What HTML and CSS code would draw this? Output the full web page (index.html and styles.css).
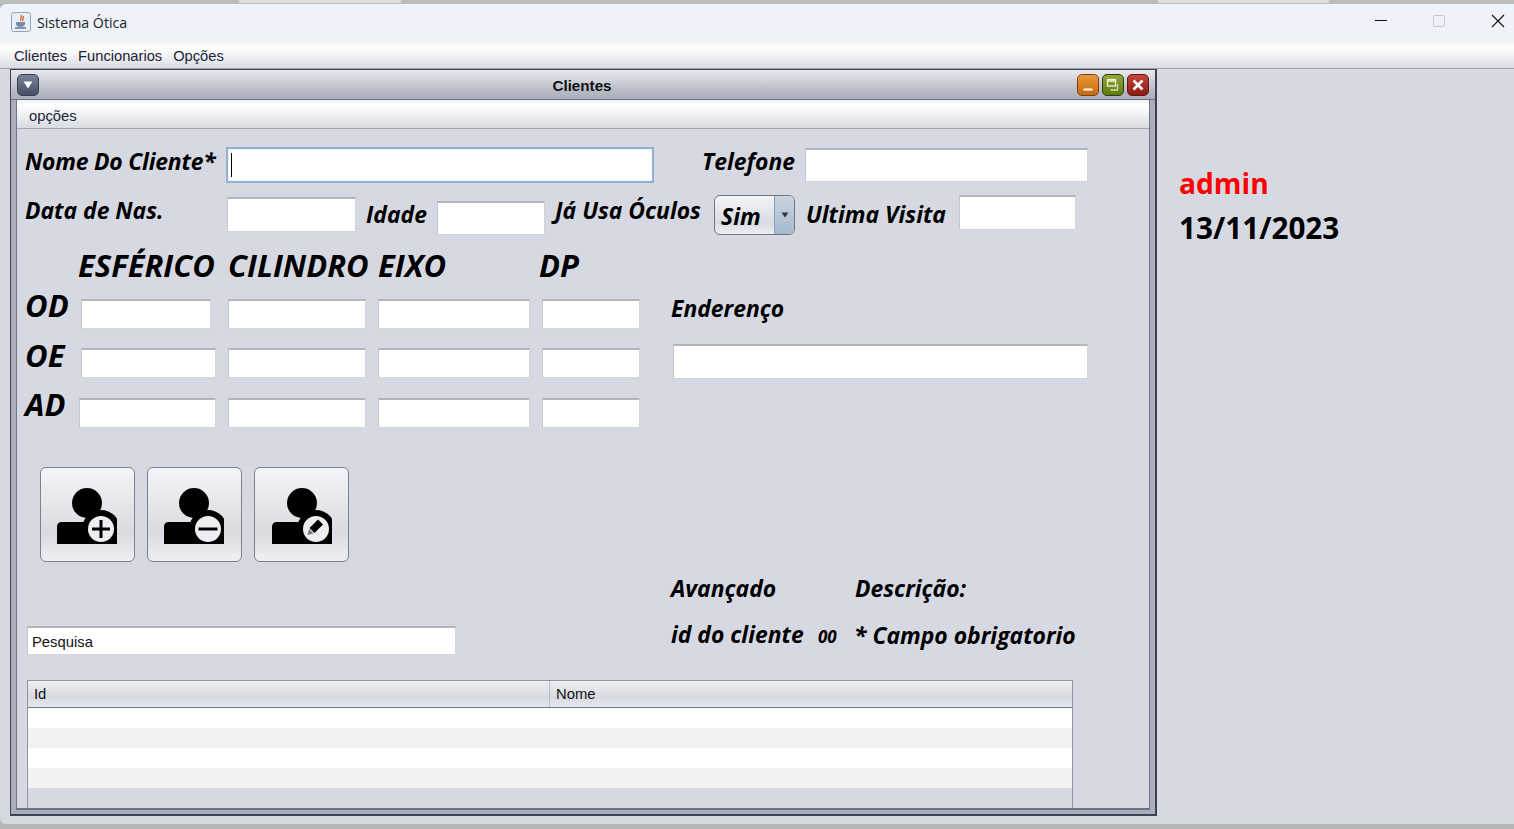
FILE: index.html
```html
<!DOCTYPE html>
<html lang="pt">
<head>
<meta charset="utf-8">
<title>Sistema Ótica</title>
<link rel="stylesheet" href="styles.css">
</head>
<body>
<div class="window">
  <div class="top-strip"><span class="strip-tab tab-a"></span><span class="strip-tab tab-b"></span></div>
  <header class="titlebar">
    <svg class="app-icon" width="20" height="20" viewBox="0 0 20 20">
      <rect x="0.500" y="0.500" width="19" height="19" rx="2" fill="#e9edf4" stroke="#8ea3bd"/>
      <path d="M10 3c2 2-2 3 0 6M12 4c1 2-1 3 0 5" fill="none" stroke="#d9642a" stroke-width="1.400"/>
      <path d="M5 10h9v2c0 2-2 3-4.500 3S5 14 5 12z" fill="#7a8ca6"/>
      <path d="M4 16h11" stroke="#5f7796" stroke-width="1.500"/>
    </svg>
    <span class="app-title">Sistema Ótica</span>
    <div class="win-controls">
      <svg width="14" height="14" viewBox="0 0 14 14"><path d="M0 6.500h12" stroke="#111" stroke-width="1"/></svg>
      <svg width="14" height="14" viewBox="0 0 14 14"><rect x="0.500" y="1.500" width="11" height="11" rx="1.500" fill="none" stroke="#c6c9cf"/></svg>
      <svg width="14" height="14" viewBox="0 0 14 14"><path d="M1 1l12 12M13 1L1 13" stroke="#111" stroke-width="1.100"/></svg>
    </div>
  </header>
  <nav class="menubar">
    <span>Clientes</span><span>Funcionarios</span><span>Opções</span>
  </nav>
  <main class="desktop">
    <section class="frame">
      <div class="frame-title">
        <span class="frame-btn btn-menu"><svg width="12" height="10" viewBox="0 0 12 10"><path d="M1.500 1.500h9L6 8.500z" fill="#fff"/></svg></span>
        <span class="frame-name">Clientes</span>
        <span class="frame-btn btn-min"><svg width="14" height="14" viewBox="0 0 14 14"><path d="M2.500 11.500h9" stroke="#fff" stroke-width="2"/></svg></span>
        <span class="frame-btn btn-max"><svg width="16" height="16" viewBox="0 0 16 16"><rect x="2.500" y="2.500" width="8" height="6.500" fill="none" stroke="#f1f3df" stroke-width="1.300"/><path d="M2.500 4h8" stroke="#f1f3df" stroke-width="1.500"/><path d="M12.500 7v6h-7" fill="none" stroke="#d8dcb4" stroke-width="1.300"/></svg></span>
        <span class="frame-btn btn-close"><svg width="14" height="14" viewBox="0 0 14 14"><path d="M2.500 2.500l9 9M11.500 2.500l-9 9" stroke="#fff" stroke-width="2.600"/></svg></span>
      </div>
      <div class="frame-inner">
        <div class="frame-menu"><span>opções</span></div>
        <form class="form">
          <div class="row row-1">
            <label class="lbl lbl-nome">Nome Do Cliente*</label>
            <div class="field field-focus f-nome"><i class="caret"></i></div>
            <label class="lbl lbl-tel">Telefone</label>
            <div class="field f-tel"></div>
          </div>
          <div class="row row-2">
            <label class="lbl lbl-data">Data de Nas.</label>
            <div class="field f-data"></div>
            <label class="lbl lbl-idade">Idade</label>
            <div class="field f-idade"></div>
            <label class="lbl lbl-oculos">Já Usa Óculos</label>
            <div class="combo"><span class="combo-value">Sim</span><span class="combo-arrow"><svg width="8" height="6" viewBox="0 0 8 6"><path d="M0.500 0.500h7L4 5.500z" fill="#333"/></svg></span></div>
            <label class="lbl lbl-visita">Ultima Visita</label>
            <div class="field f-visita"></div>
          </div>
          <div class="row row-heads">
            <span class="head h-esf">ESFÉRICO</span>
            <span class="head h-cil">CILINDRO</span>
            <span class="head h-eixo">EIXO</span>
            <span class="head h-dp">DP</span>
          </div>
          <div class="row row-od">
            <span class="head eye e-od">OD</span>
            <div class="field f-od1"></div>
            <div class="field f-cil"></div>
            <div class="field f-eixo"></div>
            <div class="field f-dp"></div>
            <label class="lbl lbl-end">Enderenço</label>
          </div>
          <div class="row row-oe">
            <span class="head eye e-oe">OE</span>
            <div class="field f-oe1"></div>
            <div class="field f-cil"></div>
            <div class="field f-eixo"></div>
            <div class="field f-dp"></div>
            <div class="field f-end"></div>
          </div>
          <div class="row row-ad">
            <span class="head eye e-ad">AD</span>
            <div class="field f-ad1"></div>
            <div class="field f-cil"></div>
            <div class="field f-eixo"></div>
            <div class="field f-dp"></div>
          </div>
          <div class="actions">
            <button type="button" class="icon-btn">
              <svg width="60" height="56" viewBox="0 0 60 56"><circle cx="30" cy="15" r="15"/><path d="M0 56V39q0-5 5-5h50q5 0 5 5v17z"/><circle cx="44" cy="41" r="19" fill="#000"/><circle cx="44" cy="41" r="13" fill="#eceef2"/><path d="M44 32v18M35 41h18" stroke="#000" stroke-width="3"/></svg>
            </button>
            <button type="button" class="icon-btn">
              <svg width="60" height="56" viewBox="0 0 60 56"><circle cx="30" cy="15" r="15"/><path d="M0 56V39q0-5 5-5h50q5 0 5 5v17z"/><circle cx="44" cy="41" r="19" fill="#000"/><circle cx="44" cy="41" r="13" fill="#eceef2"/><path d="M34.500 41h19" stroke="#000" stroke-width="3"/></svg>
            </button>
            <button type="button" class="icon-btn icon-btn-edit">
              <svg width="60" height="56" viewBox="0 0 60 56"><circle cx="30" cy="15" r="15"/><path d="M0 56V39q0-5 5-5h50q5 0 5 5v17z"/><circle cx="44" cy="41" r="19" fill="#000"/><circle cx="44" cy="41" r="13" fill="#eceef2"/><path d="M46 31.500l5 5-8.500 8.500-5-5z" fill="#000"/><path d="M37 41l4.500 4.500-6 1.500z" fill="#777"/></svg>
            </button>
          </div>
          <div class="row row-adv">
            <label class="lbl lbl-av">Avançado</label>
            <label class="lbl lbl-desc">Descrição:</label>
          </div>
          <div class="row row-search">
            <div class="field f-search">Pesquisa</div>
            <label class="lbl lbl-id">id do cliente</label>
            <span class="lbl lbl-00">00</span>
            <span class="lbl lbl-req">* Campo obrigatorio</span>
          </div>
          <div class="table">
            <div class="thead"><span class="th th-id">Id</span><span class="th th-nome">Nome</span></div>
            <div class="tr"></div><div class="tr alt"></div><div class="tr"></div><div class="tr alt"></div>
          </div>
        </form>
      </div>
    </section>
    <aside class="side">
      <div class="user">admin</div>
      <div class="date">13/11/2023</div>
    </aside>
  </main>
  <div class="bottom-strip"></div>
</div>
</body>
</html>
```
FILE: styles.css
```css
* { box-sizing: border-box; }
html, body { margin: 0; height: 100%; overflow: hidden; }
body { font-family: "Liberation Sans", Arial, sans-serif; background: #b5b5b5; }
.window { width: 1514px; height: 829px; display: flex; flex-direction: column; }

.top-strip { height: 4px; background: #bdbdbd; display: flex; flex: none; }
.strip-tab { height: 3px; background: #dcdcdc; }
.tab-a { width: 162px; margin-left: 239px; }
.tab-b { width: 171px; margin-left: 757px; }

.titlebar { height: 37px; flex: none; background: #eef3fa; display: flex; align-items: center; padding-left: 11px; border-top-left-radius: 6px; }
.app-icon { flex: none; margin-top: -1px; }
.app-title { font: 14.200px "Open Sans", sans-serif; color: #222; margin-left: 6px; margin-top: -1px; }
.win-controls { margin-left: auto; display: flex; gap: 44px; padding-right: 9px; margin-top: -3px; }

.menubar { height: 28px; flex: none; display: flex; gap: 11px; align-items: center; padding: 2px 0 0 14px; font-size: 14.700px; color: #1c2438; background: linear-gradient(#f3f4f6, #fff 25%, #f4f5f7 50%, #d9dbe1); border-bottom: 1px solid #9da3b2; }

.desktop { height: 755px; flex: none; background: #d6d9e1; display: flex; align-items: flex-start; padding-left: 10px; border-bottom-left-radius: 6px; }

.frame { width: 1147px; height: 747px; flex: none; background: #a9aeba; border: 1px solid #3b4354; border-width: 1px 2px 2px 1px; display: flex; flex-direction: column; }
.frame-title { height: 30px; flex: none; display: flex; align-items: center; gap: 3px; padding: 0 6px 0 6px; background: linear-gradient(#e9eaee, #b8bcc6 70%, #abafba); border-bottom: 1px solid #6c7280; }
.frame-name { flex: 1; text-align: center; font-weight: bold; font-size: 15.200px; color: #111; padding: 2px 0 0 48px; }
.frame-btn { width: 22px; height: 22px; border-radius: 5px; display: flex; align-items: center; justify-content: center; border: 1px solid #333; flex: none; }
.btn-menu { background: linear-gradient(#7a849a, #454e66); border-color: #3a3f4d; }
.btn-min { background: linear-gradient(#e89a3c, #c46a0e); border-color: #8a3a10; }
.btn-max { background: linear-gradient(#92a93a, #5f7a0e); border-color: #2e3d10; }
.btn-close { background: linear-gradient(#c4443a, #8e1a10); border-color: #5e1a16; }

.frame-inner { flex: 1; min-height: 0; margin: 0 5px 4px 5px; background: #d6d9e1; border-left: 1px solid #70778a; border-right: 1px solid #70778a; border-bottom: 2px solid #6c7280; overflow: hidden; }
.frame-menu { height: 29px; display: flex; align-items: center; padding: 3px 0 0 12px; font-size: 14.800px; color: #1c2438; background: linear-gradient(#f0f1f3, #fff 20%, #f1f2f4 50%, #d9dbe1); border-bottom: 1px solid #a3a8b5; }

.form { display: flex; flex-direction: column; }
.row { display: flex; flex: none; align-items: flex-start; }
.lbl { font: italic 700 22.900px "Open Sans", sans-serif; color: #000; white-space: nowrap; line-height: 30px; }
.head { font: italic 700 31px "Open Sans", sans-serif; color: #000; white-space: nowrap; line-height: 36px; }
.field { height: 30px; flex: none; background: #fff; border: 1px solid #d3d5db; border-top: 2px solid #b3b5ba; border-left-color: #c4c6cc; }
.field-focus { border: 2px solid #8fb2d4; box-shadow: inset 0 0 1px #7f9cc0; display: flex; align-items: center; padding-left: 3px; }
.caret { width: 1px; height: 24px; background: #000; display: block; }

.row-1 { height: 49px; margin-top: 18px; padding-left: 8px; }
.lbl-nome { width: 201px; margin-top: 0; letter-spacing: -0.200px; }
.f-nome { width: 428px; height: 36px; }
.lbl-tel { margin-left: 48px; width: 103px; margin-top: 0; }
.f-tel { width: 283px; height: 34px; margin-top: 1px; }

.row-2 { height: 50px; padding-left: 8px; margin-top: 1px; }
.lbl-data { width: 202px; margin-top: -1px; }
.f-data { width: 129px; height: 35px; }
.lbl-idade { margin-left: 10px; width: 71px; margin-top: 3px; }
.f-idade { width: 108px; height: 34px; margin-top: 4px; }
.lbl-oculos { margin-left: 9px; width: 160px; margin-top: -1px; padding-left: 1px; }
.combo { width: 81px; height: 40px; margin-top: -2px; flex: none; display: flex; border: 1px solid #6e7685; border-radius: 6px; overflow: hidden; background: linear-gradient(#f4f5f7, #d8dbe2 70%, #eceef3); }
.combo-value { flex: 1; font: italic 700 22.900px/42px "Open Sans", sans-serif; padding-left: 6px; color: #000; }
.combo-arrow { width: 20px; display: flex; align-items: center; justify-content: center; background: linear-gradient(#c9d4e0, #a6bacf); border-left: 1px solid #8ba0b8; }
.lbl-visita { margin-left: 11px; width: 153px; margin-top: 3px; }
.f-visita { width: 117px; height: 35px; margin-top: -2px; }

.row-heads { height: 52px; }
.h-esf { margin-left: 61px; width: 150px; }
.h-cil { width: 150px; }
.h-eixo { width: 161px; }
.h-dp { width: 60px; }

.row-od { height: 49px; padding-left: 8px; }
.row-oe { height: 50px; padding-left: 8px; }
.row-ad { height: 69px; padding-left: 8px; }
.e-od { width: 56px; margin-top: -12px; }
.e-oe { width: 56px; margin-top: -11px; }
.e-ad { width: 54px; margin-top: -12px; }
.f-od1 { width: 130px; margin-right: 17px; }
.f-oe1 { width: 135px; margin-right: 12px; }
.f-ad1 { width: 137px; margin-right: 12px; }
.f-cil { width: 138px; margin-right: 12px; }
.f-eixo { width: 152px; margin-right: 12px; }
.f-dp { width: 98px; }
.lbl-end { margin-left: 31px; margin-top: -5px; }
.f-end { width: 415px; height: 35px; margin-left: 33px; margin-top: -4px; }

.actions { display: flex; gap: 12px; padding-left: 23px; height: 95px; flex: none; }
.icon-btn { width: 95px; height: 95px; padding: 20px 0 0 16px; border: 1px solid #7b828f; border-radius: 6px; background: linear-gradient(#f4f5f7, #d9dbe1 70%, #eef0f6); display: flex; justify-content: flex-start; align-items: flex-start; }
.icon-btn-edit { padding-left: 17px; }

.row-adv { height: 30px; margin-top: 12px; padding-left: 654px; }
.lbl-av { width: 184px; }
.row-search { height: 54px; margin-top: 22px; padding-left: 10px; }
.f-search { width: 429px; height: 29px; font-size: 14.800px; color: #111; padding: 6px 0 0 4px; }
.lbl-id { margin-left: 215px; width: 147px; margin-top: -6px; }
.lbl-00 { width: 37px; font-size: 17px; margin-top: -4px; }
.lbl-req { margin-top: -5px; margin-left: -1px; }

.table { width: 1046px; margin-left: 10px; height: 130px; flex: none; border: 1px solid #9298a6; border-bottom: 0; }
.thead { height: 27px; display: flex; font-size: 14.800px; color: #111; background: linear-gradient(#eceef1, #d8dae0 65%, #e6e9f1); border-bottom: 1px solid #70757f; }
.th { display: flex; align-items: center; padding-left: 6px; }
.th-id { width: 522px; border-right: 1px solid #b9bdc7; }
.tr { height: 20px; background: #fff; }
.tr.alt { background: #f2f2f2; }

.side { padding: 94px 0 0 22px; font-family: "Open Sans", sans-serif; font-weight: 700; }
.user { font-size: 28.200px; line-height: 40px; color: #f00; }
.date { font-size: 29.700px; line-height: 40px; color: #000; margin-top: 5px; }

.bottom-strip { flex: 1; background: #b5b5b5; }
```
